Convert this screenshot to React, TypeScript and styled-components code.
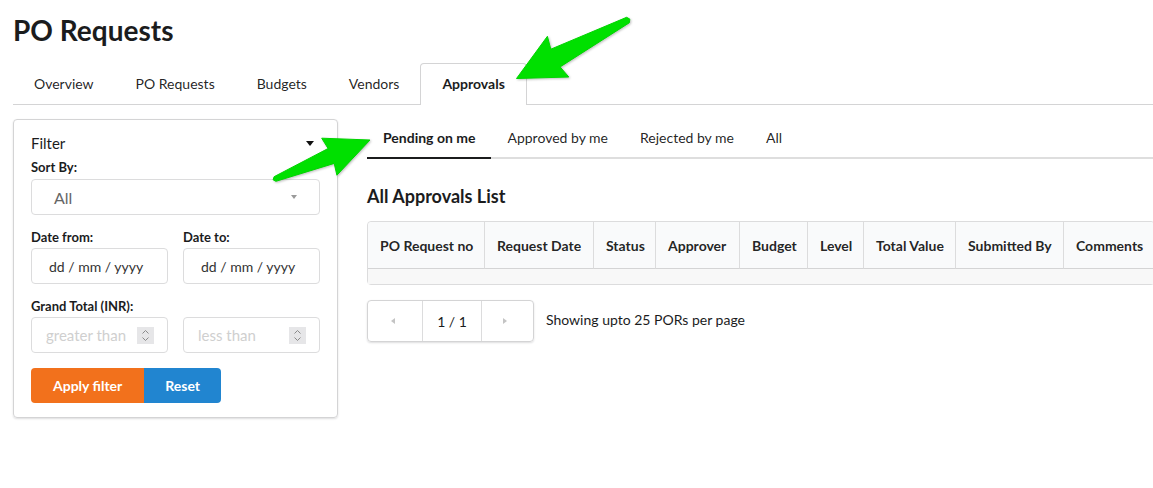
import React from 'react';
import styled, { createGlobalStyle, css } from 'styled-components';

const GlobalStyle = createGlobalStyle`
  * { box-sizing: border-box; }
  html, body { margin: 0; padding: 0; background: #fff; }
  body {
    font-family: Lato, "Helvetica Neue", Arial, sans-serif;
    font-size: 14px;
    color: rgba(0, 0, 0, 0.87);
  }
`;

const Page = styled.div`
  position: relative;
  width: 1153px;
  min-height: 488px;
  padding: 12px 0 0 13px;
`;

const Title = styled.h1`
  margin: 0;
  font-size: 28px;
  line-height: 36px;
  font-weight: 700;
  color: #1b1c1d;
`;

const TabBar = styled.div`
  display: flex;
  align-items: flex-end;
  margin-top: 15px;
  border-bottom: 1px solid #d4d4d5;
`;

const Tab = styled.div<{ $active?: boolean }>`
  height: 42px;
  margin-bottom: -1px;
  padding: 13px 20px 0;
  line-height: 14px;
  font-size: 14px;
  border: 1px solid transparent;
  border-bottom: none;
  border-radius: 4px 4px 0 0;
  color: rgba(0, 0, 0, 0.87);
  ${(p) =>
    p.$active &&
    css`
      border-color: #d4d4d5;
      background: #fff;
      font-weight: 700;
      color: #1b1c1d;
      padding-left: 21px;
      padding-right: 21px;
    `}
`;

const Body = styled.div`
  display: flex;
  align-items: flex-start;
  gap: 29px;
  margin-top: 14px;
`;

const FilterPanel = styled.div`
  width: 325px;
  flex: none;
  border: 1px solid #d4d4d5;
  border-radius: 4px;
  box-shadow: 0 1px 2px 0 rgba(34, 36, 38, 0.15);
  padding: 11px 17px 14px;
`;

const FilterHeader = styled.div`
  display: flex;
  align-items: center;
  justify-content: space-between;
  height: 24px;
  font-size: 15px;
  color: #1b1c1d;
`;

const Caret = styled.span<{ $grey?: boolean }>`
  display: inline-block;
  width: 0;
  height: 0;
  border-left: ${(p) => (p.$grey ? '3.5px' : '4px')} solid transparent;
  border-right: ${(p) => (p.$grey ? '3.5px' : '4px')} solid transparent;
  border-top: ${(p) => (p.$grey ? '4px' : '5px')} solid ${(p) => (p.$grey ? '#9a9a9a' : '#111')};
  margin-right: ${(p) => (p.$grey ? '0' : '6px')};
`;

const Field = styled.div<{ $first?: boolean }>`
  margin-top: ${(p) => (p.$first ? '3px' : '13px')};
`;

const FieldRow = styled.div<{ $flush?: boolean }>`
  display: grid;
  grid-template-columns: minmax(0, 1fr) minmax(0, 1fr);
  gap: 15px;
  margin-top: ${(p) => (p.$flush ? '0' : '13px')};
`;

const Label = styled.label<{ $gap?: number }>`
  display: block;
  font-size: 13px;
  font-weight: 700;
  line-height: 18px;
  margin-bottom: ${(p) => p.$gap ?? 2}px;
  color: #1b1c1d;
`;

const SelectBox = styled.div`
  height: 36px;
  border: 1px solid #dcdcdd;
  border-radius: 4px;
  display: flex;
  align-items: center;
  justify-content: space-between;
  padding: 0 22px;
  font-size: 16px;
  color: #666;
`;

const TextInput = styled.input`
  display: block;
  width: 100%;
  height: 36px;
  border: 1px solid #dcdcdd;
  border-radius: 4px;
  padding: 0 17px;
  font-family: inherit;
  font-size: 14px;
  color: #333;
  outline: none;
  background: #fff;
`;

const NumberBox = styled.div`
  height: 36px;
  min-width: 0;
  border: 1px solid #dcdcdd;
  border-radius: 4px;
  display: flex;
  align-items: center;
  padding: 0 13px 0 14px;
`;

const NumberInput = styled.input`
  flex: 1;
  width: 0;
  min-width: 0;
  border: none;
  outline: none;
  padding: 0;
  font-family: inherit;
  font-size: 15px;
  color: #333;
  &::placeholder {
    color: #cfcfcf;
  }
`;

const Spinner = styled.span`
  width: 17px;
  height: 17px;
  flex: none;
  background: #e6e6e8;
  display: flex;
  align-items: center;
  justify-content: center;
`;

const ButtonGroup = styled.div`
  display: flex;
  margin-top: 15px;
`;

const Button = styled.button<{ $color: string; $pos: 'left' | 'right' }>`
  height: 35px;
  padding: 0 ${(p) => (p.$pos === 'left' ? '22px' : '21px')};
  border: none;
  background: ${(p) => p.$color};
  color: #fff;
  font-family: inherit;
  font-size: 14px;
  font-weight: 700;
  border-radius: ${(p) => (p.$pos === 'left' ? '4px 0 0 4px' : '0 4px 4px 0')};
`;

const Main = styled.div`
  flex: 1;
  min-width: 0;
`;

const SubMenu = styled.div`
  display: flex;
  border-bottom: 2px solid #dedede;
`;

const SubItem = styled.div<{ $active?: boolean }>`
  padding: 12px 16px;
  line-height: 14px;
  font-size: 14px;
  margin-bottom: -2px;
  border-bottom: 2px solid transparent;
  color: rgba(0, 0, 0, 0.87);
  ${(p) =>
    p.$active &&
    css`
      border-bottom-color: #1b1c1d;
      font-weight: 700;
      color: #1b1c1d;
    `}
`;

const Heading = styled.h3`
  margin: 25px 0 13px;
  font-size: 18px;
  line-height: 24px;
  font-weight: 700;
  color: #1b1c1d;
`;

const Table = styled.table`
  width: 100%;
  table-layout: fixed;
  border-collapse: separate;
  border-spacing: 0;
  border: 1px solid #dcdcdd;
  border-radius: 4px;
`;

const Th = styled.th<{ $w: number }>`
  width: ${(p) => p.$w}px;
  height: 47px;
  padding: 0 0 0 12px;
  text-align: left;
  white-space: nowrap;
  background: #f9fafb;
  font-size: 14px;
  font-weight: 700;
  color: rgba(0, 0, 0, 0.87);
  border-bottom: 1px solid #d4d4d5;
  & + & {
    border-left: 1px solid #dcdcdd;
  }
  &:first-child {
    border-top-left-radius: 4px;
  }
  &:last-child {
    border-top-right-radius: 4px;
  }
`;

const EmptyCell = styled.td`
  height: 15px;
  padding: 0;
  background: #f8f8f8;
`;

const PagerRow = styled.div`
  display: flex;
  align-items: center;
  gap: 12px;
  margin-top: 15px;
`;

const Pager = styled.div`
  display: flex;
  height: 42px;
  border: 1px solid #d4d4d5;
  border-radius: 4px;
  box-shadow: 0 1px 2px 0 rgba(34, 36, 38, 0.15);
`;

const PagerCell = styled.div<{ $w: number }>`
  width: ${(p) => p.$w}px;
  display: flex;
  align-items: center;
  justify-content: center;
  font-size: 14px;
  color: #1b1c1d;
  & + & {
    border-left: 1px solid #dcdcdd;
  }
`;

const PagerArrow = styled.span<{ $dir: 'left' | 'right' }>`
  width: 0;
  height: 0;
  border-top: 3.5px solid transparent;
  border-bottom: 3.5px solid transparent;
  ${(p) =>
    p.$dir === 'left'
      ? css`border-right: 4px solid #c4c4c4; margin-right: 5px;`
      : css`border-left: 4px solid #c4c4c4; margin-right: 6px;`}
`;

const PagerNote = styled.span`
  font-size: 14px;
  color: #1b1c1d;
  margin-top: -3px;
`;

const Overlay = styled.svg`
  position: absolute;
  left: 0;
  top: 0;
  pointer-events: none;
  filter: drop-shadow(1px 1px 1px rgba(0, 0, 0, 0.25));
`;

type Pt = [number, number];

function arrowPoints(
  tail: Pt,
  tip: Pt,
  headLen: number,
  headHalf: number,
  neckHalf: number,
  tailHalf: number,
  sweep: number
): string {
  const dx = tip[0] - tail[0];
  const dy = tip[1] - tail[1];
  const len = Math.hypot(dx, dy);
  const ux = dx / len;
  const uy = dy / len;
  const nx = -uy;
  const ny = ux;
  const bx = tip[0] - ux * headLen;
  const by = tip[1] - uy * headLen;
  const pts: Pt[] = [
    tip,
    [bx - ux * sweep + nx * headHalf, by - uy * sweep + ny * headHalf],
    [bx + nx * neckHalf, by + ny * neckHalf],
    [tail[0] + nx * tailHalf, tail[1] + ny * tailHalf],
    [tail[0] - ux * 2, tail[1] - uy * 2],
    [tail[0] - nx * tailHalf, tail[1] - ny * tailHalf],
    [bx - nx * neckHalf, by - ny * neckHalf],
    [bx - ux * sweep - nx * headHalf, by - uy * sweep - ny * headHalf],
  ];
  return pts.map((p) => `${p[0].toFixed(1)},${p[1].toFixed(1)}`).join(' ');
}

const tabs = ['Overview', 'PO Requests', 'Budgets', 'Vendors', 'Approvals'];
const subTabs = ['Pending on me', 'Approved by me', 'Rejected by me', 'All'];
const columns: { label: string; w: number }[] = [
  { label: 'PO Request no', w: 116 },
  { label: 'Request Date', w: 109 },
  { label: 'Status', w: 62 },
  { label: 'Approver', w: 84 },
  { label: 'Budget', w: 68 },
  { label: 'Level', w: 56 },
  { label: 'Total Value', w: 92 },
  { label: 'Submitted By', w: 108 },
  { label: 'Comments', w: 91 },
];

const SpinIcon = () => (
  <svg width="9" height="13" viewBox="0 0 9 13">
    <path d="M1.5 4.5 L4.5 1.5 L7.5 4.5" fill="none" stroke="#8a8a8a" strokeWidth="1" />
    <path d="M1.5 8.5 L4.5 11.5 L7.5 8.5" fill="none" stroke="#8a8a8a" strokeWidth="1" />
  </svg>
);

const NumberField = ({ placeholder }: { placeholder: string }) => (
  <NumberBox>
    <NumberInput placeholder={placeholder} />
    <Spinner>
      <SpinIcon />
    </Spinner>
  </NumberBox>
);

export default function App() {
  return (
    <>
      <GlobalStyle />
      <Page>
        <Title>PO Requests</Title>
        <TabBar>
          {tabs.map((t) => (
            <Tab key={t} $active={t === 'Approvals'}>
              {t}
            </Tab>
          ))}
        </TabBar>
        <Body>
          <FilterPanel>
            <FilterHeader>
              <span>Filter</span>
              <Caret />
            </FilterHeader>
            <Field $first>
              <Label $gap={3}>Sort By:</Label>
              <SelectBox>
                <span>All</span>
                <Caret $grey />
              </SelectBox>
            </Field>
            <FieldRow>
              <div>
                <Label>Date from:</Label>
                <TextInput readOnly value="dd / mm / yyyy" />
              </div>
              <div>
                <Label>Date to:</Label>
                <TextInput readOnly value="dd / mm / yyyy" />
              </div>
            </FieldRow>
            <Field>
              <Label>Grand Total (INR):</Label>
              <FieldRow $flush>
                <NumberField placeholder="greater than" />
                <NumberField placeholder="less than" />
              </FieldRow>
            </Field>
            <ButtonGroup>
              <Button $color="#f2711c" $pos="left">Apply filter</Button>
              <Button $color="#2185d0" $pos="right">Reset</Button>
            </ButtonGroup>
          </FilterPanel>
          <Main>
            <SubMenu>
              {subTabs.map((t) => (
                <SubItem key={t} $active={t === 'Pending on me'}>
                  {t}
                </SubItem>
              ))}
            </SubMenu>
            <Heading>All Approvals List</Heading>
            <Table>
              <thead>
                <tr>
                  {columns.map((c) => (
                    <Th key={c.label} $w={c.w}>
                      {c.label}
                    </Th>
                  ))}
                </tr>
              </thead>
              <tbody>
                <tr>
                  <EmptyCell colSpan={columns.length} />
                </tr>
              </tbody>
            </Table>
            <PagerRow>
              <Pager>
                <PagerCell $w={54}>
                  <PagerArrow $dir="left" />
                </PagerCell>
                <PagerCell $w={59}>1 / 1</PagerCell>
                <PagerCell $w={52}>
                  <PagerArrow $dir="right" />
                </PagerCell>
              </Pager>
              <PagerNote>Showing upto 25 PORs per page</PagerNote>
            </PagerRow>
          </Main>
        </Body>
        <Overlay width="1153" height="488" viewBox="0 0 1153 488">
          <polygon
            points={arrowPoints([628, 20], [516.5, 78.5], 44, 23, 10, 3, 3)}
            fill="#00e000"
            stroke="#00d400"
            strokeWidth="1"
            strokeLinejoin="round"
          />
          <polygon
            points={arrowPoints([275, 179], [370, 140], 42, 20, 8, 2.5, 2)}
            fill="#00e000"
            stroke="#00d400"
            strokeWidth="1"
            strokeLinejoin="round"
          />
        </Overlay>
      </Page>
    </>
  );
}
